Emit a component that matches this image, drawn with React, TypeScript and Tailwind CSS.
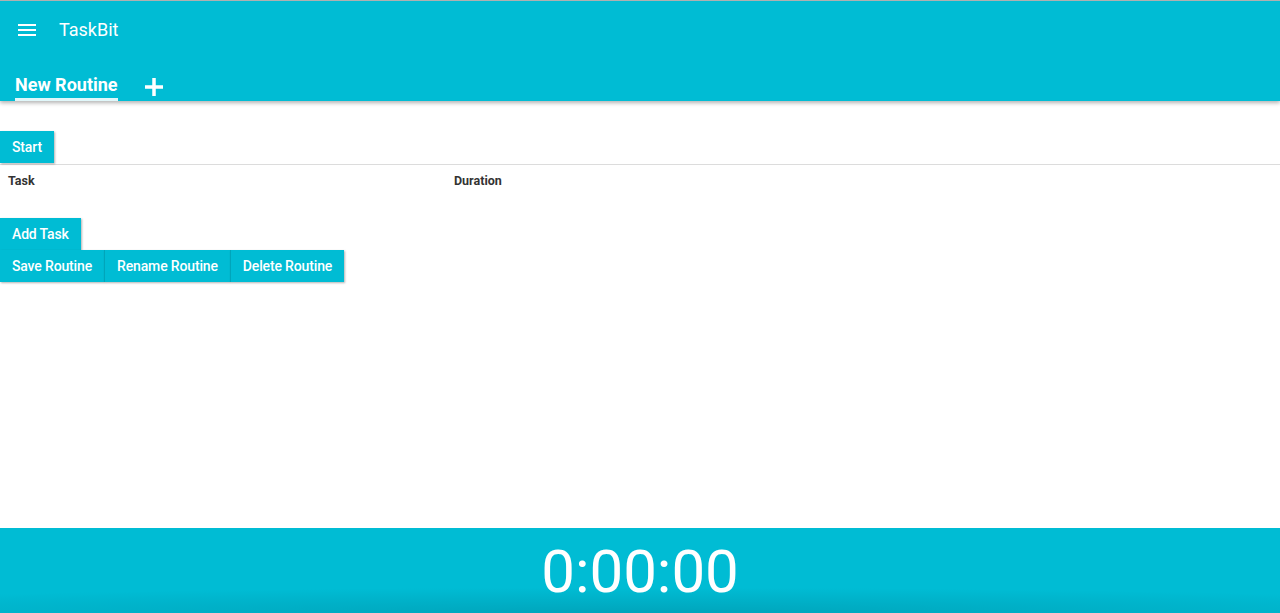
import React from 'react';

const font = { fontFamily: 'Roboto, "Liberation Sans", sans-serif' };

function Btn({ label, divider }: { label: string; divider?: boolean }) {
  return (
    <button
      className={
        'h-8 bg-[#00bcd4] px-3 text-[14px] font-medium tracking-[-0.15px] text-white shadow-[1px_1px_2px_rgba(0,0,0,0.3)]' +
        (divider ? ' border-l border-[#00a5ba]' : '')
      }
    >
      {label}
    </button>
  );
}

export default function App() {
  return (
    <div className="flex h-[613px] flex-col overflow-hidden bg-white" style={font}>
      <header className="relative z-10 border-t border-[#b0b0b0] bg-[#00bcd4] text-white shadow-[0_2px_4px_rgba(0,0,0,0.3)]">
        <div className="flex h-[55px] items-center pt-[2px]">
          <div className="flex w-[54px] justify-center">
            <svg width="18" height="12" viewBox="0 0 18 12" fill="white">
              <rect x="0" y="0" width="18" height="2" />
              <rect x="0" y="5" width="18" height="2" />
              <rect x="0" y="10" width="18" height="2" />
            </svg>
          </div>
          <span className="pl-[5px] text-[18px]">TaskBit</span>
        </div>
        <div className="flex h-[45px] items-end pl-[15px]">
          <div className="flex flex-col">
            <span className="text-[18px] font-bold leading-[24px]">New Routine</span>
            <div className="mt-[1px] h-[3px] bg-[#e0f7fa]" />
          </div>
          <svg className="mb-[5px] ml-[27px]" width="18" height="18" viewBox="0 0 18 18" fill="white">
            <rect x="7.25" y="0" width="3.5" height="18" />
            <rect x="0" y="7.25" width="18" height="3.5" />
          </svg>
        </div>
      </header>

      <main className="flex-1 pt-[30px]">
        <div className="flex">
          <Btn label="Start" />
        </div>
        <div className="mt-px border-t border-[#dcdcdc]" />
        <div className="flex h-[32px] items-center text-[12.5px] font-bold text-[#333]">
          <span className="w-[454px] pl-2">Task</span>
          <span>Duration</span>
        </div>
        <div className="mt-[21px] flex">
          <Btn label="Add Task" />
        </div>
        <div className="flex">
          <Btn label="Save Routine" />
          <Btn label="Rename Routine" divider />
          <Btn label="Delete Routine" divider />
        </div>
      </main>

      <footer className="flex h-[85px] items-center justify-center bg-[#00bcd4] bg-[radial-gradient(ellipse_75%_30%_at_50%_100%,rgba(0,130,150,0.4),rgba(0,188,212,0))]">
        <span className="pt-[2px] text-[60px] leading-none text-white">0:00:00</span>
      </footer>
    </div>
  );
}
